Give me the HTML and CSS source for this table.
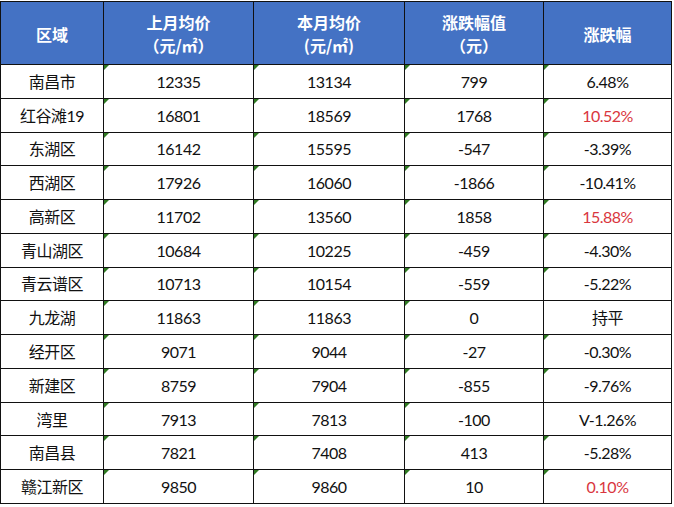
FILE: index.html
```html
<!DOCTYPE html>
<html lang="zh-CN">
<head>
<meta charset="utf-8">
<title>南昌房价</title>
<link rel="stylesheet" href="styles.css">
</head>
<body>
<div class="sheet">
  <div class="hd">区域</div>
  <div class="hd two">上月均价<br>（元/㎡）</div>
  <div class="hd two">本月均价<br>(元/㎡)</div>
  <div class="hd two">涨跌幅值<br>（元）</div>
  <div class="hd">涨跌幅</div>

  <div class="c">南昌市</div><div class="c f">12335</div><div class="c f">13134</div><div class="c f">799</div><div class="c f">6.48%</div>
  <div class="c">红谷滩19</div><div class="c f">16801</div><div class="c f">18569</div><div class="c f">1768</div><div class="c f up">10.52%</div>
  <div class="c">东湖区</div><div class="c f">16142</div><div class="c f">15595</div><div class="c f">-547</div><div class="c f">-3.39%</div>
  <div class="c">西湖区</div><div class="c f">17926</div><div class="c f">16060</div><div class="c f">-1866</div><div class="c f">-10.41%</div>
  <div class="c">高新区</div><div class="c f">11702</div><div class="c f">13560</div><div class="c f">1858</div><div class="c f up">15.88%</div>
  <div class="c">青山湖区</div><div class="c f">10684</div><div class="c f">10225</div><div class="c f">-459</div><div class="c f">-4.30%</div>
  <div class="c">青云谱区</div><div class="c f">10713</div><div class="c f">10154</div><div class="c f">-559</div><div class="c f">-5.22%</div>
  <div class="c">九龙湖</div><div class="c f">11863</div><div class="c f">11863</div><div class="c f">0</div><div class="c">持平</div>
  <div class="c">经开区</div><div class="c f">9071</div><div class="c f">9044</div><div class="c f">-27</div><div class="c f">-0.30%</div>
  <div class="c">新建区</div><div class="c f">8759</div><div class="c f">7904</div><div class="c f">-855</div><div class="c f">-9.76%</div>
  <div class="c">湾里</div><div class="c f">7913</div><div class="c f">7813</div><div class="c f">-100</div><div class="c">V-1.26%</div>
  <div class="c">南昌县</div><div class="c f">7821</div><div class="c f">7408</div><div class="c f">413</div><div class="c f">-5.28%</div>
  <div class="c">赣江新区</div><div class="c f">9850</div><div class="c f">9860</div><div class="c f">10</div><div class="c f up">0.10%</div>
</div>
</body>
</html>
```

FILE: styles.css
```css
html, body {
  margin: 0;
  padding: 0;
  background: #ffffff;
}

body {
  padding-top: 1px;
}

.sheet {
  display: grid;
  grid-template-columns: 102px 149px 150px 138px 127px;
  grid-template-rows: 62px repeat(13, 1fr);
  gap: 1px;
  padding: 1px;
  width: 670px;
  height: 501px;
  background: #111111;
  font-family: Lato, "Noto Sans CJK SC", sans-serif;
}

.hd {
  background: #4472c4;
  color: #ffffff;
  font-family: "Noto Sans CJK SC", sans-serif;
  font-weight: 700;
  font-size: 16px;
  line-height: 23px;
  display: flex;
  align-items: center;
  justify-content: center;
  text-align: center;
  padding-top: 2px;
}

.c {
  position: relative;
  background: #ffffff;
  color: #111111;
  font-size: 16px;
  line-height: 20px;
  letter-spacing: -0.5px;
  display: flex;
  align-items: center;
  justify-content: center;
  padding-top: 1px;
}

.f::before {
  content: "";
  position: absolute;
  left: 0;
  top: 0;
  width: 0;
  height: 0;
  border-top: 5px solid #2f7a22;
  border-right: 5px solid transparent;
}

.up {
  color: #d9363e;
}
```
